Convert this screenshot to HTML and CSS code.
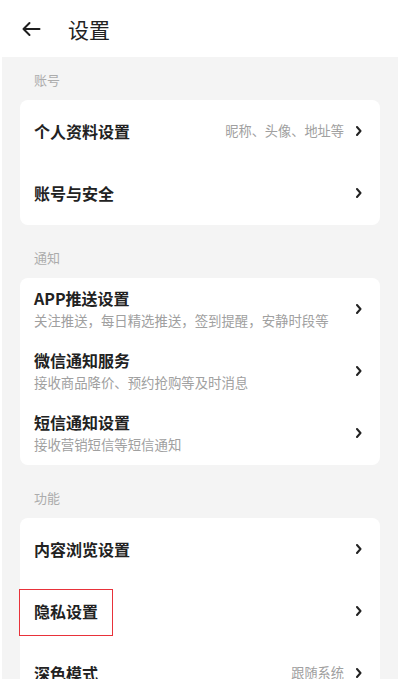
FILE: index.html
```html
<!DOCTYPE html>
<html lang="zh">
<head>
<meta charset="utf-8">
<link rel="stylesheet" href="styles.css">
</head>
<body>
<header class="topbar">
  <svg class="back" width="20" height="16" viewBox="0 0 20 16"><path d="M18.5 8H2.5M8.5 2L2.5 8l6 6" fill="none" stroke="#1e1e1e" stroke-width="2" stroke-linecap="round" stroke-linejoin="round"/></svg>
  <h1 class="title">设置</h1>
</header>
<main class="content">
  <div class="label">账号</div>
  <section class="card">
    <div class="row"><span class="name">个人资料设置</span><span class="hint">昵称、头像、地址等</span><svg class="chev" width="6" height="10" viewBox="0 0 6 10"><path d="M1 1l3.5 4L1 9" fill="none" stroke="#222" stroke-width="2" stroke-linecap="round" stroke-linejoin="round"/></svg></div>
    <div class="row"><span class="name">账号与安全</span><svg class="chev" width="6" height="10" viewBox="0 0 6 10"><path d="M1 1l3.5 4L1 9" fill="none" stroke="#222" stroke-width="2" stroke-linecap="round" stroke-linejoin="round"/></svg></div>
  </section>
  <div class="label">通知</div>
  <section class="card">
    <div class="row"><div class="stack"><span class="name">APP推送设置</span><span class="sub">关注推送，每日精选推送，签到提醒，安静时段等</span></div><svg class="chev" width="6" height="10" viewBox="0 0 6 10"><path d="M1 1l3.5 4L1 9" fill="none" stroke="#222" stroke-width="2" stroke-linecap="round" stroke-linejoin="round"/></svg></div>
    <div class="row"><div class="stack"><span class="name">微信通知服务</span><span class="sub">接收商品降价、预约抢购等及时消息</span></div><svg class="chev" width="6" height="10" viewBox="0 0 6 10"><path d="M1 1l3.5 4L1 9" fill="none" stroke="#222" stroke-width="2" stroke-linecap="round" stroke-linejoin="round"/></svg></div>
    <div class="row"><div class="stack"><span class="name">短信通知设置</span><span class="sub">接收营销短信等短信通知</span></div><svg class="chev" width="6" height="10" viewBox="0 0 6 10"><path d="M1 1l3.5 4L1 9" fill="none" stroke="#222" stroke-width="2" stroke-linecap="round" stroke-linejoin="round"/></svg></div>
  </section>
  <div class="label">功能</div>
  <section class="card">
    <div class="row"><span class="name">内容浏览设置</span><svg class="chev" width="6" height="10" viewBox="0 0 6 10"><path d="M1 1l3.5 4L1 9" fill="none" stroke="#222" stroke-width="2" stroke-linecap="round" stroke-linejoin="round"/></svg></div>
    <div class="row"><span class="name">隐私设置</span><svg class="chev" width="6" height="10" viewBox="0 0 6 10"><path d="M1 1l3.5 4L1 9" fill="none" stroke="#222" stroke-width="2" stroke-linecap="round" stroke-linejoin="round"/></svg><span class="mark"></span></div>
    <div class="row"><span class="name">深色模式</span><span class="hint">跟随系统</span><svg class="chev" width="6" height="10" viewBox="0 0 6 10"><path d="M1 1l3.5 4L1 9" fill="none" stroke="#222" stroke-width="2" stroke-linecap="round" stroke-linejoin="round"/></svg></div>
  </section>
</main>
</body>
</html>
```
FILE: styles.css
```css
* { box-sizing: border-box; }
html, body { margin: 0; padding: 0; }
body {
  width: 400px;
  height: 679px;
  overflow: hidden;
  background: #ffffff;
  font-family: "Noto Sans CJK SC", "Noto Sans", sans-serif;
  color: #222;
}
.topbar {
  height: 57px;
  display: flex;
  align-items: center;
  padding-left: 21px;
  background: #fff;
}
.back { display: block; margin-top: 1px; }
.title {
  margin: 0 0 0 27px;
  font-size: 21px;
  font-weight: 400;
  line-height: 28px;
  color: #222;
}
.content {
  margin: 0 2px;
  padding: 0 18px;
  background: #f4f4f4;
  min-height: 622px;
}
.label {
  padding: 14px 0 11px 14px;
  font-size: 13px;
  line-height: 18px;
  color: #acacac;
}
.card {
  background: #fff;
  border-radius: 8px;
  margin-bottom: 10px;
  padding-bottom: 1px;
}
.row {
  position: relative;
  height: 62px;
  display: flex;
  align-items: center;
  padding: 0 18px 0 14px;
}
.name {
  font-size: 16px;
  font-weight: 700;
  line-height: 22px;
  color: #222;
}
.stack {
  display: flex;
  flex-direction: column;
  flex: 1;
}
.stack .name { line-height: 20px; }
.sub {
  font-size: 13.4px;
  line-height: 22px;
  color: #a0a0a0;
  margin-top: 1px;
}
.hint {
  margin-left: auto;
  margin-right: 12px;
  font-size: 13.2px;
  color: #a0a0a0;
  line-height: 18px;
}
.chev { margin-left: auto; flex-shrink: 0; }
.hint + .chev { margin-left: 0; }
.mark {
  position: absolute;
  left: -1px;
  top: 9px;
  width: 94px;
  height: 47px;
  border: 1.5px solid #e8323a;
}
```
